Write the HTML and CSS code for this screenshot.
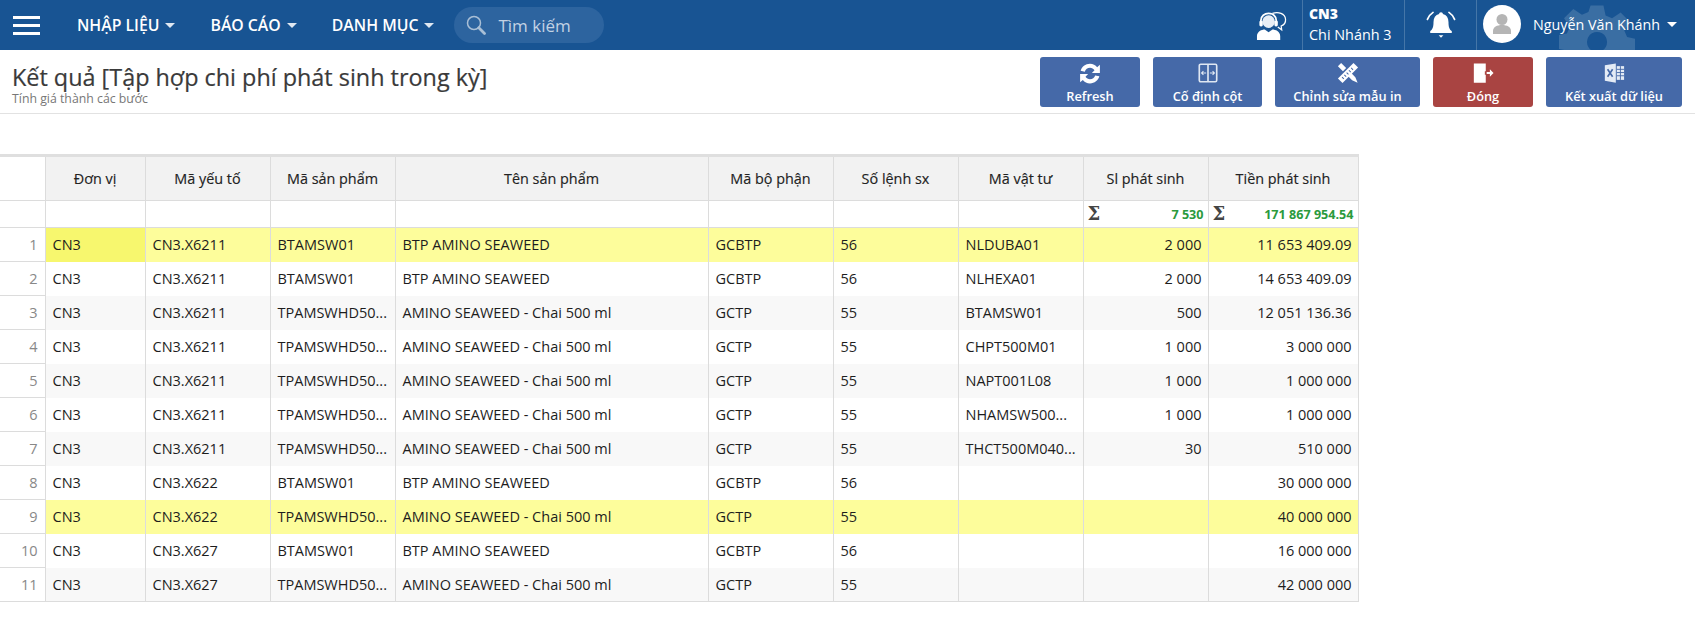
FILE: index.html
```html
<!DOCTYPE html>
<html lang="vi">
<head>
<meta charset="utf-8">
<title>Kết quả</title>
<link rel="stylesheet" href="styles.css">
</head>
<body>
<header class="topbar">
  <div class="gear-wrap"><svg class="gear" viewBox="-3 -3 106 106"><path fill="#3a6ea3" fill-rule="evenodd" d="M41 -1h18l3 14 9 4 12-8 13 13-8 12 4 9 14 3v18l-14 3-4 9 8 12-13 13-12-8-9 4-3 14H41l-3-14-9-4-12 8L4 83l8-12-4-9-14-3V41l14-3 4-9-8-12L17 4l12 8 9-4zM50 36a14 14 0 1 0 .1 0z"/></svg></div>
  <div class="burger"><span></span><span></span><span></span></div>
  <nav class="menu">
    <a class="menu-item">NHẬP LIỆU<i class="caret"></i></a>
    <a class="menu-item">BÁO CÁO<i class="caret"></i></a>
    <a class="menu-item">DANH MỤC<i class="caret"></i></a>
  </nav>
  <div class="search">
    <svg class="search-ico" viewBox="0 0 20 20"><circle cx="8" cy="8" r="6.5" fill="none" stroke="#a9bfd6" stroke-width="1.5"/><path d="M12.800 12.800l5.700 5.700" stroke="#a9bfd6" stroke-width="2.800" stroke-linecap="round"/></svg>
    <span>Tìm kiếm</span>
  </div>
  <div class="right">
    <div class="cell support">
      <svg viewBox="0 0 32 32" class="support-ico"><path fill="none" stroke="#fff" stroke-width="1.300" d="M17 3.500c6-2 13 0 13.500 6 .3 3.500-2 6-4.500 7l.5 4-4-3"/><circle cx="13" cy="12" r="6.500" fill="#e8eef5"/><path fill="none" stroke="#fff" stroke-width="1.800" d="M5 14v-3c0-10 16-10 16 0v3"/><rect x="3.500" y="11" width="3.500" height="6" rx="1.500" fill="#fff"/><rect x="19" y="11" width="3.500" height="6" rx="1.500" fill="#fff"/><path fill="#fff" d="M1 31v-4c0-5 5-7 8-7l4 3 4-3c3 0 8 2 8 7v4z"/></svg>
    </div>
    <div class="cell branch"><b>CN3</b><span>Chi Nhánh 3</span></div>
    <div class="cell bell">
      <svg viewBox="0 0 32 32" class="bell-ico"><path fill="#fff" d="M16 2.500c1.200 0 2 .8 2 1.800 4 1 6 4 6 8.700 0 5 1 7.500 3.500 9.500v2h-23v-2C7 20.500 8 18 8 13c0-4.700 2-7.700 6-8.700C14 3.300 14.800 2.500 16 2.500z"/><path fill="#fff" d="M13.500 27h5l-2.500 2.500z"/><path fill="none" stroke="#fff" stroke-width="1.800" stroke-linecap="round" d="M1.500 10C2.500 7 4.500 4.500 7.500 2.500M30.500 10C29.500 7 27.500 4.500 24.500 2.500"/></svg>
    </div>
    <div class="cell user">
      <span class="avatar"><svg viewBox="0 0 38 38"><circle cx="19" cy="14.500" r="5.500" fill="#b5b5b5"/><path fill="#b5b5b5" d="M10 29v-3c0-4 4-6 9-6s9 2 9 6v3z"/></svg></span>
      <span class="uname">Nguyễn Văn Khánh</span><i class="caret"></i>
    </div>
  </div>
</header>

<section class="titlebar">
  <div class="titles">
    <h1>Kết quả [Tập hợp chi phí phát sinh trong kỳ]</h1>
    <p>Tính giá thành các bước</p>
  </div>
  <div class="actions">
    <button class="btn w-refresh">
      <svg viewBox="2 2 20 20"><path fill="#fff" d="M12 3.500c2.700 0 5 1.200 6.500 3.200L21 4.500V12h-7.300l2.400-2.500c-.9-1.300-2.400-2.200-4.100-2.200-2.200 0-4.100 1.500-4.700 3.500L3.500 10C4.400 6.300 7.900 3.500 12 3.500zM3 13h7.300l-2.400 2.500c.9 1.300 2.400 2.200 4.100 2.200 2.200 0 4.100-1.500 4.700-3.500l3.800.8c-.9 3.700-4.400 6.500-8.500 6.500-2.700 0-5-1.200-6.500-3.200L3 20.500z"/></svg>
      <span>Refresh</span>
    </button>
    <button class="btn w-fix">
      <svg viewBox="0 0 24 24"><rect x="2.500" y="2.500" width="19" height="19" rx="1.500" fill="none" stroke="#dfe7f2" stroke-width="1.800"/><path d="M12 2.500v19" stroke="#dfe7f2" stroke-width="1.800"/><path d="M5 12h5M14 12h5M7 10l-2 2 2 2M17 10l2 2-2 2" fill="none" stroke="#dfe7f2" stroke-width="1.200"/></svg>
      <span>Cố định cột</span>
    </button>
    <button class="btn w-edit">
      <svg viewBox="0 0 24 24"><path fill="#fff" d="M18 1l5 5L6 23l-5-5z"/><path fill="#fff" d="M4.500 1 10 6.500 6.500 10 1 4.500zM14.500 11 20 16.500l2.500 6-6-2.500L11 14.500z"/><path stroke="#4569a8" stroke-width="1.100" d="M15.500 6.500l2 2M13 9l2 2M10.500 11.500l2 2M8 14l2 2M5.500 16.500l2 2"/></svg>
      <span>Chỉnh sửa mẫu in</span>
    </button>
    <button class="btn btn-red w-close">
      <svg viewBox="0 0 24 24"><path fill="#fff" d="M2 1.500h13V10h-1v4h1v8.500H2z"/><path fill="#fff" d="M16 10.800h3.500V8l4 4-4 4v-2.800H16z"/></svg>
      <span>Đóng</span>
    </button>
    <button class="btn w-export">
      <svg viewBox="0 0 24 24"><path fill="#e4ebf5" d="M2 3.500 14 1.500v21L2 20.500z"/><path fill="#e4ebf5" d="M15 4.500h8v15h-8z"/><path stroke="#4569a8" d="M15 8h8M15 11.500h8M15 15h8M19 4.500v15"/><path stroke="#4569a8" stroke-width="1.800" fill="none" d="M5 8l5.500 8M10.500 8 5 16"/></svg>
      <span>Kết xuất dữ liệu</span>
    </button>
  </div>
</section>

<div class="spacer"></div>

<table class="grid">
  <colgroup>
    <col class="c0"><col class="c1"><col class="c2"><col class="c3"><col class="c4"><col class="c5"><col class="c6"><col class="c7"><col class="c8"><col class="c9">
  </colgroup>
  <thead>
    <tr class="head">
      <th class="idx"></th><th>Đơn vị</th><th>Mã yếu tố</th><th>Mã sản phẩm</th><th>Tên sản phẩm</th><th>Mã bộ phận</th><th>Số lệnh sx</th><th>Mã vật tư</th><th>Sl phát sinh</th><th>Tiền phát sinh</th>
    </tr>
    <tr class="sum">
      <td class="idx"></td><td></td><td></td><td></td><td></td><td></td><td></td><td></td>
      <td><div class="sumcell"><b class="sigma">Σ</b><b class="total">7 530</b></div></td>
      <td><div class="sumcell"><b class="sigma">Σ</b><b class="total">171 867 954.54</b></div></td>
    </tr>
  </thead>
  <tbody>
    <tr class="hl"><td class="idx">1</td><td class="cur">CN3</td><td>CN3.X6211</td><td>BTAMSW01</td><td>BTP AMINO SEAWEED</td><td>GCBTP</td><td>56</td><td>NLDUBA01</td><td class="num">2 000</td><td class="num">11 653 409.09</td></tr>
    <tr><td class="idx">2</td><td>CN3</td><td>CN3.X6211</td><td>BTAMSW01</td><td>BTP AMINO SEAWEED</td><td>GCBTP</td><td>56</td><td>NLHEXA01</td><td class="num">2 000</td><td class="num">14 653 409.09</td></tr>
    <tr class="alt"><td class="idx">3</td><td>CN3</td><td>CN3.X6211</td><td>TPAMSWHD50...</td><td>AMINO SEAWEED - Chai 500 ml</td><td>GCTP</td><td>55</td><td>BTAMSW01</td><td class="num">500</td><td class="num">12 051 136.36</td></tr>
    <tr><td class="idx">4</td><td>CN3</td><td>CN3.X6211</td><td>TPAMSWHD50...</td><td>AMINO SEAWEED - Chai 500 ml</td><td>GCTP</td><td>55</td><td>CHPT500M01</td><td class="num">1 000</td><td class="num">3 000 000</td></tr>
    <tr class="alt"><td class="idx">5</td><td>CN3</td><td>CN3.X6211</td><td>TPAMSWHD50...</td><td>AMINO SEAWEED - Chai 500 ml</td><td>GCTP</td><td>55</td><td>NAPT001L08</td><td class="num">1 000</td><td class="num">1 000 000</td></tr>
    <tr><td class="idx">6</td><td>CN3</td><td>CN3.X6211</td><td>TPAMSWHD50...</td><td>AMINO SEAWEED - Chai 500 ml</td><td>GCTP</td><td>55</td><td>NHAMSW500...</td><td class="num">1 000</td><td class="num">1 000 000</td></tr>
    <tr class="alt"><td class="idx">7</td><td>CN3</td><td>CN3.X6211</td><td>TPAMSWHD50...</td><td>AMINO SEAWEED - Chai 500 ml</td><td>GCTP</td><td>55</td><td>THCT500M040...</td><td class="num">30</td><td class="num">510 000</td></tr>
    <tr><td class="idx">8</td><td>CN3</td><td>CN3.X622</td><td>BTAMSW01</td><td>BTP AMINO SEAWEED</td><td>GCBTP</td><td>56</td><td></td><td class="num"></td><td class="num">30 000 000</td></tr>
    <tr class="hl"><td class="idx">9</td><td>CN3</td><td>CN3.X622</td><td>TPAMSWHD50...</td><td>AMINO SEAWEED - Chai 500 ml</td><td>GCTP</td><td>55</td><td></td><td class="num"></td><td class="num">40 000 000</td></tr>
    <tr><td class="idx">10</td><td>CN3</td><td>CN3.X627</td><td>BTAMSW01</td><td>BTP AMINO SEAWEED</td><td>GCBTP</td><td>56</td><td></td><td class="num"></td><td class="num">16 000 000</td></tr>
    <tr class="alt"><td class="idx">11</td><td>CN3</td><td>CN3.X627</td><td>TPAMSWHD50...</td><td>AMINO SEAWEED - Chai 500 ml</td><td>GCTP</td><td>55</td><td></td><td class="num"></td><td class="num">42 000 000</td></tr>
  </tbody>
</table>
</body>
</html>
```

FILE: styles.css
```css
* { box-sizing: border-box; }
html, body { margin: 0; padding: 0; }
body { font-family: "Open Sans", "Noto Sans", sans-serif; color: #222; background: #fff; height: 621px; overflow: hidden; }

.topbar { height: 50px; background: #185493; display: flex; align-items: center; color: #fff; position: relative; overflow: hidden; }
.gear-wrap { position: absolute; left: 1559px; top: 4px; width: 76px; height: 76px; }
.gear { width: 76px; height: 76px; display: block; }
.burger { width: 27px; height: 19px; margin-left: 13px; display: flex; flex-direction: column; justify-content: space-between; }
.burger span { display: block; height: 3px; background: #fff; }
.menu { display: flex; margin-left: 37px; gap: 35px; }
.menu-item { font-size: 15.800px; font-weight: 600; display: flex; align-items: center; white-space: nowrap; }
.caret { display: inline-block; width: 0; height: 0; border-left: 5.500px solid transparent; border-right: 5.500px solid transparent; border-top: 5px solid #dfe8f2; margin-left: 6px; }
.search { width: 150px; height: 36px; margin-left: 20px; border-radius: 18px; background: #2d649f; display: flex; align-items: center; padding-left: 12px; color: #c2d2e4; font-size: 17px; position: relative; z-index: 1; }
.search-ico { width: 20px; height: 20px; margin-right: 12px; }

.right { margin-left: auto; display: flex; height: 50px; position: relative; z-index: 1; }
.cell { height: 50px; display: flex; align-items: center; border-left: 1px solid #4576a8; }
.support { border-left: 0; width: 52px; }
.support-ico { width: 31px; height: 31px; margin-left: 6px; }
.branch { width: 102px; flex-direction: column; align-items: flex-start; justify-content: center; padding-left: 6px; padding-bottom: 2px; font-size: 14.400px; line-height: 21px; }
.branch b { font-size: 14px; font-weight: 800; }
.bell { width: 72px; justify-content: center; }
.bell-ico { width: 30px; height: 30px; }
.user { padding: 0 0 2px 6px; width: 219px; font-size: 14.300px; }
.user .caret { border-top-color: #fff; margin-left: 7px; border-left-width: 5px; border-right-width: 5px; }
.avatar { width: 38px; height: 38px; border-radius: 50%; background: #fff; display: block; margin-right: 12px; }
.avatar svg { display: block; }
.uname { white-space: nowrap; }

.titlebar { height: 64px; padding: 7px 13px 0 12px; display: flex; justify-content: space-between; border-bottom: 1px solid #e2e2e2; }
.titles h1 { margin: 5px 0 0; font-size: 23.400px; line-height: 30px; font-weight: 400; color: #3a3a3a; -webkit-text-stroke: .2px #3a3a3a; white-space: nowrap; }
.titles p { margin: 0; font-size: 12.300px; line-height: 13px; color: #777; }
.actions { display: flex; gap: 13px; }
.btn { height: 50px; padding: 5px 0 0; border: 0; border-radius: 3px; background: #4569a8; color: #fff; font-family: inherit; font-size: 12.800px; font-weight: 600; display: flex; flex-direction: column; align-items: center; justify-content: flex-start; }
.btn svg { width: 22px; height: 22px; display: block; margin-bottom: 3px; }
.btn-red { background: #a94442; }
.w-refresh { width: 100px; }
.w-fix { width: 109px; }
.w-edit { width: 145px; }
.w-close { width: 100px; }
.w-export { width: 136px; }

.spacer { height: 40px; }

.grid { border-collapse: collapse; table-layout: fixed; width: 1358px; font-size: 14.500px; border-top: 3px solid #dfdfdf; }
.c0 { width: 45px; } .c1 { width: 100px; } .c2 { width: 125px; } .c3 { width: 125px; } .c4 { width: 313px; }
.c5 { width: 125px; } .c6 { width: 125px; } .c7 { width: 125px; } .c8 { width: 125px; } .c9 { width: 150px; }
.grid th, .grid td { border: 1px solid #dcdcdc; padding: 0 7px; white-space: nowrap; overflow: hidden; }
.grid th:first-child, .grid td:first-child { border-left: 0; }
.head th { height: 45px; background: #f2f2f2; font-weight: 400; color: #222; font-size: 14.400px; text-align: center; -webkit-text-stroke: .15px #222; padding: 0 6px 1px; }
.head .idx { background: #fff; }
.sum td { height: 27px; padding: 0 4px; }
tbody tr { height: 34px; }
tbody td { color: #1d1d1d; padding-bottom: 1px; }
.grid .idx { text-align: right; color: #888; padding-right: 7px; font-size: 14.500px; }
.grid tbody td:not(.idx) { border-top: 0; border-bottom: 0; }
.grid tbody tr:last-child td { border-bottom: 1px solid #dcdcdc; }
.grid .num { text-align: right; padding-right: 6px; }
.alt td:not(.idx) { background: #f8f8f8; }
.hl td:not(.idx) { background: #fdfd9b; }
.hl td.cur { background: #f7f76e; }
.sumcell { display: flex; align-items: center; justify-content: space-between; }
.sigma { font-family: "DejaVu Serif", serif; font-size: 18px; color: #444; line-height: 1; }
.total { color: #2b9a3d; font-size: 12.600px; font-weight: 700; }
```
